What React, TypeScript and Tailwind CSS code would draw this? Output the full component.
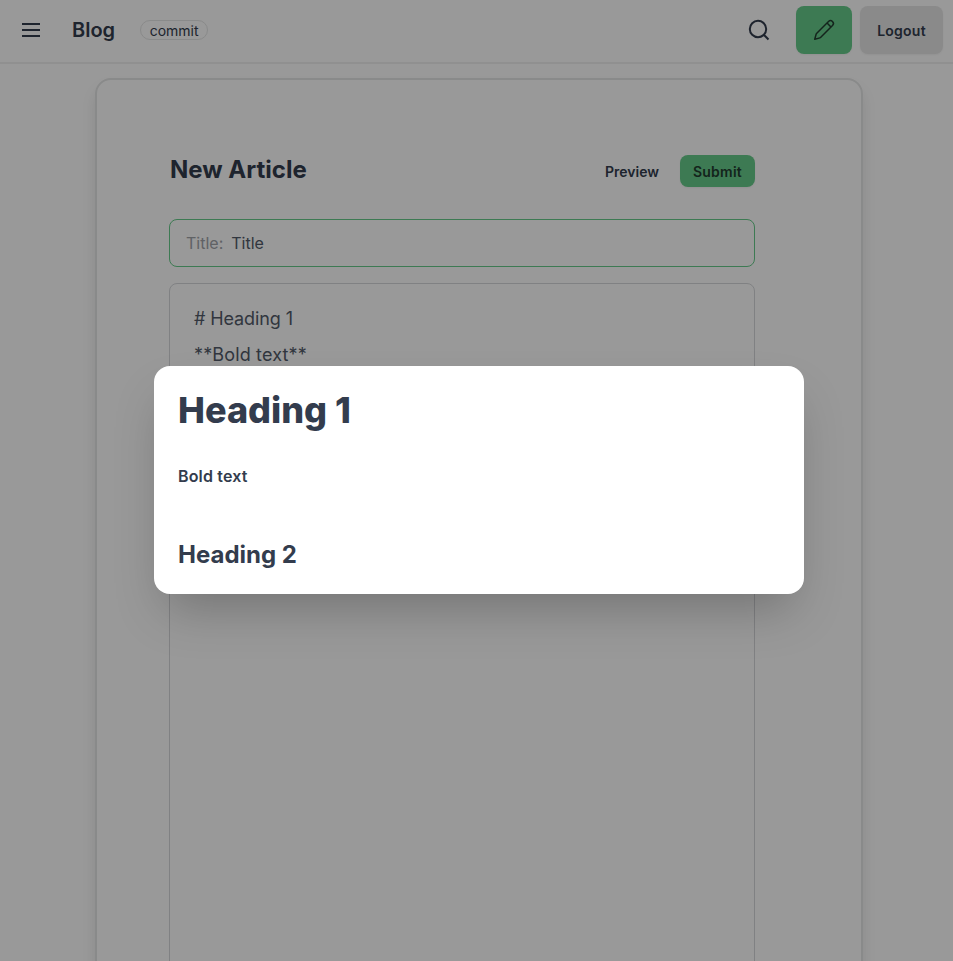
export default function App() {
  return (
    <div className="relative h-[961px] overflow-hidden bg-white font-['Inter',sans-serif] text-[#333c4d]">
      <header className="flex h-16 items-center border-b-2 border-[#f0f0f0] pb-0.5 pr-[10px]">
        <button className="ml-[19px] flex size-6 items-center justify-center">
          <svg className="size-6" viewBox="0 0 24 24" fill="none" stroke="currentColor" strokeWidth="2"><path d="M3 6h18M3 12h18M3 18h18" /></svg>
        </button>
        <span className="ml-[29px] text-xl font-semibold">Blog</span>
        <span className="ml-[25px] flex h-5 w-[68px] items-center justify-center rounded-full border border-[#e5e6e6] pt-0.5 text-sm">commit</span>
        <div className="ml-auto flex items-center">
          <svg className="mr-[25px] size-6" viewBox="0 0 24 24" fill="none" stroke="currentColor" strokeWidth="2"><circle cx="11" cy="11" r="8.2" /><path d="m16.8 16.8 4.7 4.7" /></svg>
          <button className="flex h-12 w-14 items-center justify-center rounded-lg bg-[#66cc8a] text-[#223d30] shadow-xs">
            <svg className="size-6" viewBox="0 0 24 24" fill="currentColor"><path d="M21.03 2.97a3.578 3.578 0 0 1 0 5.06L9.062 20a2.25 2.25 0 0 1-.999.58l-5.116 1.395a.75.75 0 0 1-.92-.921l1.395-5.116a2.25 2.25 0 0 1 .58-.999L15.97 2.97a3.578 3.578 0 0 1 5.06 0ZM15 6.06 5.062 16a.75.75 0 0 0-.193.333l-1.05 3.85 3.85-1.05A.75.75 0 0 0 8 18.938L17.94 9 15 6.06Zm2.03-2.03-.97.97L19 7.94l.97-.97a2.079 2.079 0 0 0-2.94-2.94Z" /></svg>
          </button>
          <button className="ml-2 h-12 w-[83px] rounded-lg bg-[#e6e6e6] pt-0.5 text-sm font-semibold tracking-[0.25px] shadow-xs">Logout</button>
        </div>
      </header>
      <main className="ml-[95px] mt-[14px] h-[1000px] w-[768px] rounded-2xl border-2 border-[#e5e6e6] pl-[72px] pr-[106px] pt-[75px] shadow-[0_10px_16px_-2px_rgb(0_0_0/0.13)]">
        <div className="flex h-8 items-center">
          <h1 className="pb-0.5 pl-px text-2xl font-bold">New Article</h1>
          <button className="ml-auto mr-[21px] pt-0.5 text-sm font-semibold">Preview</button>
          <button className="h-8 w-[75px] rounded-lg bg-[#66cc8a] pt-0.5 text-sm font-semibold tracking-[0.25px] text-[#223d30] shadow-xs">Submit</button>
        </div>
        <div className="mt-8 flex h-12 items-center gap-2 rounded-lg border border-[#66cc8a] px-4">
          <span className="text-[#a0a3a9]">Title:</span><span className="text-[#525b69]">Title</span>
        </div>
        <div className="mt-4 h-[800px] rounded-lg border border-[#d6d8db] px-6 pt-[17px] text-lg leading-9 text-[#525b69]">
          <p className="tracking-[-0.1px]"># Heading 1</p>
          <p className="tracking-[0.15px]">**Bold text**</p>
        </div>
      </main>
      <div className="absolute inset-0 flex items-center justify-center bg-black/40">
        <section className="ml-[5px] mt-[-1px] h-[228px] w-[650px] rounded-2xl bg-white px-6 pt-6 shadow-2xl">
          <h1 className="text-4xl font-extrabold leading-10">Heading 1</h1>
          <p className="mt-8 font-semibold leading-7 tracking-[0.15px]">Bold text</p>
          <h2 className="mt-[49px] text-2xl font-bold leading-8">Heading 2</h2>
        </section>
      </div>
    </div>
  );
}
